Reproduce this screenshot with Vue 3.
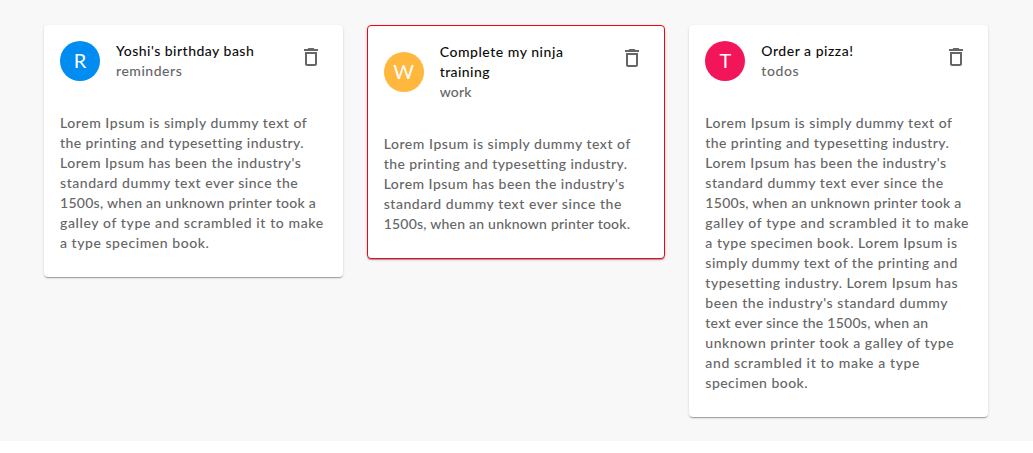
<script setup>
const notes = [
  {
    initial: 'R', tone: 'blue',
    title: [['Yoshi\'s birthday bash', 138]],
    category: ['reminders', 66],
    lines: [
      ['Lorem Ipsum is simply dummy text of', 247],
      ['the printing and typesetting industry.', 243.5],
      ['Lorem Ipsum has been the industry\'s', 241],
      ['standard dummy text ever since the', 238],
      ['1500s, when an unknown printer took a', 256],
      ['galley of type and scrambled it to make', 263.5],
      ['a type specimen book.', 149],
    ],
  },
  {
    initial: 'W', tone: 'amber', urgent: true,
    title: [['Complete my ninja', 123.5], ['training', 50]],
    category: ['work', 32],
    lines: [
      ['Lorem Ipsum is simply dummy text of', 247],
      ['the printing and typesetting industry.', 243.5],
      ['Lorem Ipsum has been the industry\'s', 241],
      ['standard dummy text ever since the', 238],
      ['1500s, when an unknown printer took.', 246.5],
    ],
  },
  {
    initial: 'T', tone: 'pink',
    title: [['Order a pizza!', 92]],
    category: ['todos', 37.5],
    lines: [
      ['Lorem Ipsum is simply dummy text of', 247],
      ['the printing and typesetting industry.', 243.5],
      ['Lorem Ipsum has been the industry\'s', 241],
      ['standard dummy text ever since the', 238],
      ['1500s, when an unknown printer took a', 256],
      ['galley of type and scrambled it to make', 263.5],
      ['a type specimen book. Lorem Ipsum is', 252],
      ['simply dummy text of the printing and', 252.5],
      ['typesetting industry. Lorem Ipsum has', 252],
      ['been the industry\'s standard dummy', 242.5],
      ['text ever since the 1500s, when an', 223],
      ['unknown printer took a galley of type', 248.5],
      ['and scrambled it to make a type', 214.5],
      ['specimen book.', 102.5],
    ],
  },
]

// Tracks a line of text so that it sets to the given measure.
const vMeasure = {
  mounted(el, { value }) {
    const natural = el.getBoundingClientRect().width
    el.style.letterSpacing = `${(value - natural) / (el.textContent.length - 0.5)}px`
  },
}
</script>

<template>
  <main class="page">
    <article v-for="note in notes" :key="note.initial" class="card" :class="{ urgent: note.urgent }">
      <header class="card-header">
        <div class="avatar" :class="note.tone">{{ note.initial }}</div>
        <div class="heading">
          <div v-for="[text, width] in note.title" :key="text" class="row title">
            <span v-measure="width">{{ text }}</span>
          </div>
          <div class="row category"><span v-measure="note.category[1]">{{ note.category[0] }}</span></div>
        </div>
        <button class="delete" type="button" aria-label="Delete">
          <svg viewBox="0 0 24 24" width="24" height="24">
            <path d="M6 19c0 1.1.9 2 2 2h8c1.1 0 2-.9 2-2V7H6v12zM8 9h8v10H8V9zm7.5-5l-1-1h-5l-1 1H5v2h14V4h-3.5z" />
          </svg>
        </button>
      </header>
      <div class="card-content">
        <div v-for="[text, width] in note.lines" :key="text" class="row">
          <span v-measure="width">{{ text }}</span>
        </div>
      </div>
    </article>
  </main>
</template>

<style>
body {
  background: #fff;
}
</style>

<style scoped>
.page {
  box-sizing: border-box;
  height: 441px;
  padding: 25px 45px 24px 44px;
  display: grid;
  grid-template-columns: repeat(3, 1fr);
  gap: 24px;
  align-items: start;
  background: #f8f8f8;
  font-family: Lato, "Open Sans", sans-serif;
  font-size: 14px;
  font-weight: 500;
  line-height: 20px;
  color: #666;
}
.card {
  min-width: 0;
  background: #fff;
  border-radius: 4px;
  box-shadow: 0 2px 1px -1px rgba(0, 0, 0, 0.2), 0 1px 1px rgba(0, 0, 0, 0.14), 0 1px 3px rgba(0, 0, 0, 0.12);
}
.card.urgent {
  border: 1px solid #f80018;
}
.card-header {
  display: flex;
  align-items: center;
  padding: 16px;
}
.avatar {
  flex: none;
  width: 40px;
  height: 40px;
  margin-right: 16px;
  border-radius: 50%;
  color: #fff;
  font-size: 20px;
  font-weight: 400;
  line-height: 39px;
  text-align: center;
}
.blue {
  background: #008cf0;
}
.amber {
  background: #ffb73e;
}
.pink {
  background: #f31559;
}
.heading {
  flex: 1;
}
.row {
  height: 20px;
  white-space: nowrap;
}
.title {
  color: #0c0c0c;
}
.delete {
  align-self: flex-start;
  display: flex;
  margin: -8px -8px -8px 0;
  padding: 12px;
  border: 0;
  background: none;
}
.delete svg {
  fill: #666;
}
.card-content {
  padding: 16px 16px 24px;
}
</style>
